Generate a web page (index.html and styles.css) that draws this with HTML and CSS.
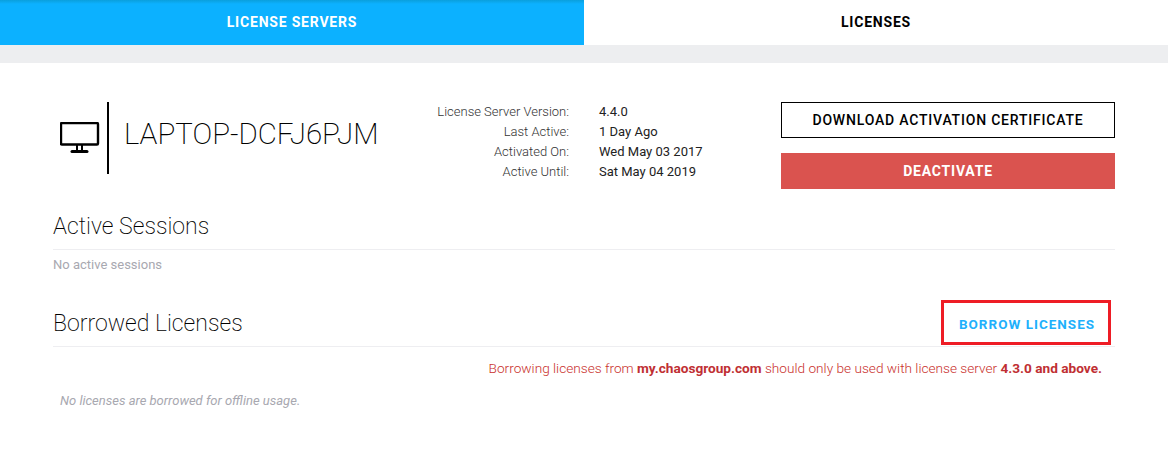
FILE: index.html
```html
<!DOCTYPE html>
<html lang="en">
<head>
  <meta charset="UTF-8">
  <title>License Servers</title>
  <link rel="stylesheet" href="styles.css">
</head>
<body>
  <div class="tabs">
    <div class="tab active">LICENSE SERVERS</div>
    <div class="tab">LICENSES</div>
  </div>
  <div class="band"></div>

  <div class="container">
    <div class="server">
      <div class="server-name">
        <div class="server-icon">
          <svg width="40" height="32" viewBox="0 0 40 32" fill="none" stroke="#000">
            <rect x="1" y="1" width="37" height="21.5" rx="1" stroke-width="2.4"/>
            <path d="M17 23v6M22 23v6" stroke-width="2"/>
            <path d="M12 29.5h15" stroke-width="3" stroke-linecap="round"/>
          </svg>
        </div>
        <h1>LAPTOP-DCFJ6PJM</h1>
      </div>

      <div class="info">
        <div class="info-label">License Server Version:</div>
        <div class="info-value">4.4.0</div>
        <div class="info-label">Last Active:</div>
        <div class="info-value">1 Day Ago</div>
        <div class="info-label">Activated On:</div>
        <div class="info-value">Wed May 03 2017</div>
        <div class="info-label">Active Until:</div>
        <div class="info-value">Sat May 04 2019</div>
      </div>

      <div class="actions">
        <button class="btn btn-outline">DOWNLOAD ACTIVATION CERTIFICATE</button>
        <button class="btn btn-danger">DEACTIVATE</button>
      </div>
    </div>

    <div class="section-head first">
      <h2>Active Sessions</h2>
    </div>
    <p class="empty">No active sessions</p>

    <div class="section-head second">
      <h2>Borrowed Licenses</h2>
      <button class="btn-borrow">BORROW LICENSES</button>
    </div>
    <p class="warning">Borrowing licenses from <b>my.chaosgroup.com</b> should only be used with license server <b>4.3.0 and above.</b></p>
    <p class="empty-italic">No licenses are borrowed for offline usage.</p>
  </div>
</body>
</html>
```

FILE: styles.css
```css
* {
  box-sizing: border-box;
}

body {
  margin: 0;
  font-family: Roboto, sans-serif;
  background-color: #fff;
  color: #000;
}

.tabs {
  display: flex;
  height: 45px;
}

.tab {
  width: 584px;
  line-height: 45px;
  text-align: center;
  font-size: 14px;
  font-weight: 700;
  letter-spacing: 0.8px;
  color: #000;
}

.tab.active {
  background: linear-gradient(#0a9fdc, #0cb1ff 4px);
  color: #fff;
}

.band {
  height: 18px;
  background-color: #edeef0;
}

.container {
  padding: 39px 53px 0;
}

.server {
  display: flex;
  align-items: flex-start;
  height: 87px;
}

.server-name {
  display: flex;
  align-items: center;
  width: 367px;
  height: 72px;
}

.server-icon {
  width: 56px;
  height: 72px;
  margin-right: 15px;
  padding: 20px 0 0 7px;
  border-right: 2px solid #000;
}

.server-name h1 {
  margin: 0 0 8px;
  font-size: 29.4px;
  font-weight: 200;
  white-space: nowrap;
}

.info {
  display: grid;
  grid-template-columns: 149px auto;
  grid-auto-rows: 20px;
  column-gap: 30px;
  width: 361px;
  font-size: 13px;
  line-height: 20px;
}

.info-label {
  text-align: right;
  font-weight: 300;
  color: #333;
}

.info-value {
  color: #222;
}

.actions {
  display: flex;
  flex-direction: column;
  gap: 15px;
  width: 334px;
}

.btn {
  height: 36px;
  padding: 0;
  border-radius: 0;
  font-family: Roboto, sans-serif;
  font-size: 14px;
  font-weight: 700;
  letter-spacing: 0.8px;
}

.btn-outline {
  background-color: #fff;
  border: 1px solid #000;
  color: #000;
  font-weight: 500;
}

.btn-danger {
  background-color: #da534f;
  border: 1px solid #d9534f;
  color: #fff;
}

.section-head {
  display: flex;
  justify-content: space-between;
  align-items: center;
  border-bottom: 1px solid #eeeef1;
}

.section-head.first {
  height: 49px;
  margin-top: 12px;
  padding-top: 2px;
}

.section-head.second {
  height: 47px;
  margin-top: 28px;
  position: relative;
}

.section-head h2 {
  margin: 0;
  font-size: 23px;
  font-weight: 200;
}

.empty {
  margin: 7px 0 0;
  font-size: 13px;
  line-height: 15px;
  color: #a8a8b0;
}

.btn-borrow {
  position: absolute;
  right: 4px;
  top: 0;
  width: 170px;
  height: 45px;
  padding: 2px 0 0 2px;
  background-color: #fff;
  border: 3px solid #ee1c25;
  font-family: Roboto, sans-serif;
  font-size: 13.5px;
  font-weight: 700;
  letter-spacing: 1px;
  color: #1eb0fc;
}

.warning {
  margin: 13px 13px 0 0;
  text-align: right;
  font-size: 13.65px;
  line-height: 16px;
  font-weight: 300;
  color: #c9302c;
}

.warning b {
  font-weight: 700;
  color: #c02f33;
}

.empty-italic {
  margin: 17px 0 0 7px;
  font-size: 13px;
  line-height: 15px;
  font-style: italic;
  color: #a8a8b0;
}
```
